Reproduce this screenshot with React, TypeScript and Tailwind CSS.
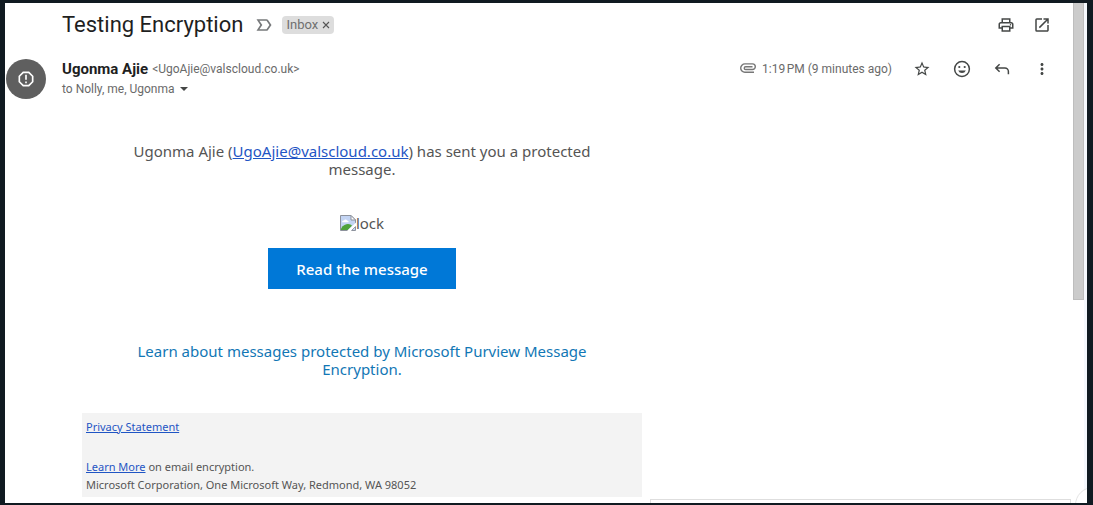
import type { ReactNode } from "react";
import {
  MdLabelImportantOutline,
  MdMoreVert,
  MdOpenInNew,
  MdOutlinePrint,
  MdReportGmailerrorred,
  MdStarBorder,
} from "react-icons/md";

function IconButton({ label, children }: { label: string; children: ReactNode }) {
  return (
    <button
      type="button"
      aria-label={label}
      className="flex size-10 items-center justify-center text-[#444746]"
    >
      {children}
    </button>
  );
}

function SmileIcon() {
  return (
    <svg viewBox="0 0 20 20" className="size-5" fill="none" aria-hidden="true">
      <circle cx="10" cy="10" r="7.4" stroke="currentColor" strokeWidth="1.5" />
      <circle cx="7.3" cy="8" r="1.1" fill="currentColor" />
      <circle cx="12.7" cy="8" r="1.1" fill="currentColor" />
      <path d="M6.2 11.5h7.6a4.1 4.1 0 0 1-7.6 0Z" fill="currentColor" />
    </svg>
  );
}

function ReplyIcon() {
  return (
    <svg viewBox="0 0 20 20" className="size-5" fill="none" aria-hidden="true">
      <path
        d="M7.6 5.2 3.8 9l3.8 3.8M4 9h8.9a3.5 3.5 0 0 1 3.5 3.5v2.7"
        stroke="currentColor"
        strokeWidth="1.5"
      />
    </svg>
  );
}

function AttachmentIcon() {
  return (
    <svg viewBox="0 0 16 10" className="h-[10px] w-4" fill="none" role="img" aria-label="Has attachment">
      <path
        d="M14 9.300H4.900a4.200 4.200 0 0 1 0-8.400h7.600a2.800 2.800 0 0 1 0 5.600H5.600a1.300 1.300 0 0 1 0-2.700H12.500"
        stroke="currentColor"
        strokeWidth="1.4"
      />
    </svg>
  );
}

function BrokenImageIcon() {
  return (
    <svg viewBox="0 0 16 16" className="size-4" aria-hidden="true">
      <path d="M0.5 0.5h10.5l4.5 4.5v4.5l-6 6h-9z" fill="#c3d4f3" />
      <path d="M2 7.2c0-1.2 1-1.9 2-1.7.4-1.3 2.6-1.3 3 .1 1.2-.1 1.7.7 1.600 1.600z" fill="#fff" />
      <path d="M1 15.5v-2c2-3.5 5-4.5 7-4.5 2 0 3 .8 4 1.8l-4.700 4.700z" fill="#4fa33b" />
      <path d="M15.5 11.5v4h-4z" fill="#c3d4f3" />
      <path d="M8 15.5h-7.500v-15h10.500l4.500 4.500v4M15.500 11.500v4h-4z" fill="none" stroke="#8d929c" />
      <path d="M16 7.5v3l-5.500 5.500h-3.500z" fill="#fff" />
      <path d="M11 .5V5h4.5z" fill="#fff" stroke="#8d929c" />
    </svg>
  );
}

function MessageHeader() {
  return (
    <header className="font-['Roboto',sans-serif]">
      <div className="flex h-11 items-center pr-[11px] pl-[57px]">
        <h1 className="text-[22px] leading-7 text-[#1f1f1f]">Testing Encryption</h1>
        <button type="button" aria-label="Mark as important" className="ml-[11px] text-[#77797b]">
          <MdLabelImportantOutline className="size-5" />
        </button>
        <span className="ml-2 flex h-[18px] items-center gap-1 rounded bg-[#dddddd] px-1 text-[13px] text-[#6f6f6f]">
          Inbox
          <button type="button" aria-label="Remove label Inbox" className="text-[#555555]">
            <svg viewBox="0 0 8 8" className="size-2" aria-hidden="true">
              <path d="M1 1l6 6M7 1l-6 6" stroke="currentColor" strokeWidth="1.1" />
            </svg>
          </button>
        </span>
        <div className="ml-auto flex">
          <div className="-mr-1">
            <IconButton label="Print all">
              <MdOutlinePrint className="size-[18px]" />
            </IconButton>
          </div>
          <IconButton label="Open in new window">
            <MdOpenInNew className="size-[18px]" />
          </IconButton>
        </div>
      </div>

      <div className="flex items-start pt-2 pr-[11px]">
        <div className="mr-4 ml-px flex size-10 items-center justify-center self-end rounded-full bg-[#5f5f5f] text-white">
          <MdReportGmailerrorred className="size-5" aria-label="Unverified sender" />
        </div>
        <div className="min-w-0 flex-1 pt-1">
          <div className="flex h-5 items-center gap-1">
            <span className="text-[15px] font-bold text-[#1f1f1f]">Ugonma Ajie</span>
            <span className="text-[12px] text-[#6a6a6a]">&lt;UgoAjie@valscloud.co.uk&gt;</span>
          </div>
          <div className="flex h-5 items-center gap-1 text-[12px] text-[#6a6a6a]">
            to Nolly, me, Ugonma
            <button type="button" aria-label="Show details" className="px-px text-[#444746]">
              <svg viewBox="0 0 8 4" className="h-1 w-2" aria-hidden="true">
                <path d="M0 0h8L4 4z" fill="currentColor" />
              </svg>
            </button>
          </div>
        </div>
        <div className="-mt-2 flex h-11 items-center">
          <span className="mr-[6px] pb-[2px] text-[#777777]">
            <AttachmentIcon />
          </span>
          <span className="mr-[10px] text-[12px] text-[#6a6a6a]">{"1:19\u202fPM (9 minutes ago)"}</span>
          <IconButton label="Star">
            <MdStarBorder className="size-[18px]" />
          </IconButton>
          <IconButton label="Add reaction">
            <SmileIcon />
          </IconButton>
          <IconButton label="Reply">
            <ReplyIcon />
          </IconButton>
          <IconButton label="More">
            <MdMoreVert className="size-[18px]" />
          </IconButton>
        </div>
      </div>
    </header>
  );
}

function MessageBody() {
  return (
    <article className="ml-[77px] max-w-[560px] font-['Noto_Sans',sans-serif] text-[15px] leading-[18px] text-[#555555]">
      <p className="mx-auto max-w-[480px] pt-[43px] text-center">
        Ugonma Ajie (
        <a href="mailto:UgoAjie@valscloud.co.uk" className="text-[#1f55c4] underline">
          UgoAjie@valscloud.co.uk
        </a>
        ) has sent you a protected message.
      </p>
      <div className="mt-9 flex items-center justify-center">
        <BrokenImageIcon />
        lock
      </div>
      <div className="mt-4 flex justify-center">
        <button type="button" className="h-[41px] bg-[#0078d7] px-7 font-medium text-white">
          Read the message
        </button>
      </div>
      <p className="mx-auto mt-[53px] max-w-[480px] text-center">
        <a href="#purview" className="text-[#1277b5]">
          Learn about messages protected by Microsoft Purview Message Encryption.
        </a>
      </p>
      <footer className="mt-[35px] bg-[#f3f3f3] px-1 pt-[5px] pb-[3px] text-[11px]">
        <a href="#privacy" className="text-[#1f55c4] underline">
          Privacy Statement
        </a>
        <p className="mt-[22px]">
          <a href="#learn" className="text-[#1f55c4] underline">
            Learn More
          </a>{" "}
          on email encryption.
        </p>
        <p>Microsoft Corporation, One Microsoft Way, Redmond, WA 98052</p>
      </footer>
    </article>
  );
}

export default function App() {
  return (
    <div className="flex min-h-screen bg-[#101a21] pt-[3px] pr-[6px] pb-[2px] pl-[5px]">
      <div className="relative flex flex-1 overflow-hidden bg-white">
        <main className="flex-1">
          <MessageHeader />
          <MessageBody />
        </main>
        <div className="w-[11px]">
          <div className="h-[297px] border-x border-b border-[#bdbdbd] bg-[#cbcbcb]" />
        </div>
        <div className="w-[3px] bg-[#f5f8fd]" />
        <div className="absolute right-4 -bottom-1 h-2 w-[421px] border border-[#dedede] bg-white" />
        <div className="absolute -right-6 -bottom-5 size-9 rounded-full border border-[#e4e4e4] bg-white" />
      </div>
    </div>
  );
}
